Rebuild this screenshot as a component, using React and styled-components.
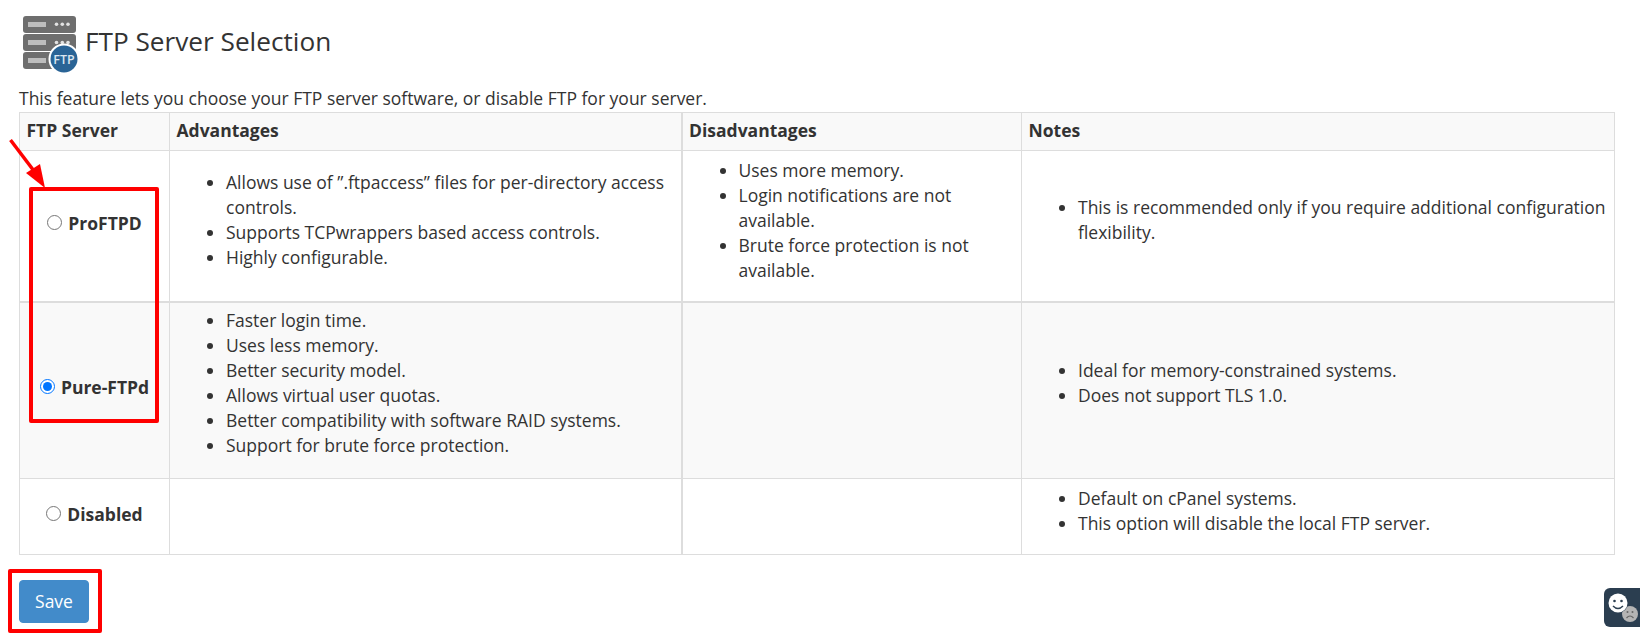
import React from "react";
import styled, { createGlobalStyle } from "styled-components";

const GlobalStyle = createGlobalStyle`
  html, body {
    margin: 0;
    background: #fff;
    overflow: hidden;
  }
  body {
    font-family: "Open Sans", "Liberation Sans", sans-serif;
    font-size: 17.500px;
    line-height: 25px;
    color: #333;
  }
`;

const Page = styled.div`
  position: relative;
  width: 1640px;
  height: 641px;
  padding: 12px 25px 0 19px;
  box-sizing: border-box;
`;

const Header = styled.header`
  display: flex;
  align-items: center;
  gap: 3px;
  height: 62px;
  margin-left: 3px;
`;

const Title = styled.h1`
  margin: 0 0 4px;
  font-size: 26.200px;
  font-weight: 400;
  line-height: 30px;
  color: #333;
`;

const Intro = styled.p`
  margin: 12px 0 0;
  height: 26px;
`;

const Table = styled.table`
  border-collapse: collapse;
  table-layout: fixed;
  width: 1596px;
`;

const HeadCell = styled.th`
  height: 35px;
  padding: 0 6.500px 2px;
  background: #f9f9f9;
  border: 1px solid #ddd;
  border-left-width: ${(props) => (props.$thick ? "2px" : "1px")};
  border-bottom-width: 1px;
  text-align: left;
  font-weight: 700;
`;

const Row = styled.tr`
  height: ${(props) => props.$height}px;
  background: ${(props) => (props.$striped ? "#f9f9f9" : "#fff")};
`;

const Cell = styled.td`
  padding: 0 7px;
  border: 1px solid #ddd;
  border-left-width: ${(props) => (props.$thick ? "2px" : "1px")};
  border-top-width: ${(props) => (props.$thickTop ? "2px" : "1px")};
  vertical-align: middle;
`;

const ChoiceCell = styled(Cell)`
  text-align: center;
`;

const Choice = styled.label`
  display: inline-block;
  margin-bottom: ${(props) => props.$bottom || 4}px;
  font-weight: 700;
`;

const Radio = styled.input.attrs({ type: "radio", name: "ftp" })`
  width: 15px;
  height: 15px;
  margin: 0 6px 0 0;
  position: relative;
  top: -3px;
  vertical-align: middle;
  accent-color: #0075ff;
`;

const List = styled.ul`
  margin: 0 0 ${(props) => props.$bottom || 11}px;
  padding-left: 49px;
`;

const SaveButton = styled.button`
  display: block;
  width: 70px;
  height: 43px;
  margin-top: 25px;
  padding: 0;
  border: 1px solid #428bca;
  border-radius: 4px;
  background: #428bca;
  color: #fff;
  font: inherit;
`;

const Annotation = styled.div`
  position: absolute;
  border: 4px solid #ff0000;
  border-radius: 2px;
  box-sizing: border-box;
  pointer-events: none;
  left: ${(props) => props.$left}px;
  top: ${(props) => props.$top}px;
  width: ${(props) => props.$width}px;
  height: ${(props) => props.$height}px;
`;

const ArrowMark = styled.svg`
  position: absolute;
  left: 8px;
  top: 138px;
`;

const FeedbackTab = styled.div`
  position: absolute;
  right: 0;
  top: 588px;
  width: 36px;
  height: 39px;
  background: #2b3e50;
  border-radius: 6px 0 0 6px;
`;

const ServerIcon = () => (
  <svg width="60" height="62" viewBox="0 0 60 62">
    <rect x="1" y="4" width="53" height="17" rx="3" fill="#6e6e6e" />
    <rect x="1" y="22" width="53" height="17" rx="3" fill="#6e6e6e" />
    <rect x="1" y="40" width="53" height="17" rx="3" fill="#6e6e6e" />
    <rect x="6" y="10" width="18" height="5" fill="#bdbdbd" />
    <rect x="6" y="28" width="18" height="5" fill="#bdbdbd" />
    <rect x="6" y="46" width="18" height="5" fill="#bdbdbd" />
    <circle cx="34.500" cy="12.300" r="1.800" fill="#e2e2e2" />
    <circle cx="40.300" cy="12.300" r="1.800" fill="#e2e2e2" />
    <circle cx="46" cy="12.300" r="1.800" fill="#e2e2e2" />
    <circle cx="34.500" cy="30.500" r="1.800" fill="#e2e2e2" />
    <circle cx="40.300" cy="30.500" r="1.800" fill="#e2e2e2" />
    <circle cx="46" cy="30.500" r="1.800" fill="#e2e2e2" />
    <circle cx="42" cy="47" r="15.500" fill="#fff" />
    <circle cx="42" cy="47" r="13.500" fill="#2a6496" />
    <text x="42" y="51.500" textAnchor="middle" fontSize="12.500" fontWeight="600" fill="#dbe6f0" fontFamily="Open Sans">FTP</text>
  </svg>
);

const Arrow = () => (
  <ArrowMark width="40" height="56" viewBox="0 0 40 56">
    <line x1="2.500" y1="2" x2="26" y2="33" stroke="#ff0000" strokeWidth="3.500" />
    <polygon points="37,50 18,35 32,26" fill="#ff0000" />
  </ArrowMark>
);

const Smiley = () => (
  <FeedbackTab>
    <svg width="36" height="39" viewBox="0 0 36 39">
      <circle cx="26" cy="26" r="8" fill="#b4b4b4" />
      <circle cx="23.500" cy="24" r="1" fill="#666" />
      <circle cx="28.500" cy="24" r="1" fill="#666" />
      <path d="M22.500 30 Q26 26 29.500 30" fill="none" stroke="#666" strokeWidth="1.200" />
      <circle cx="14" cy="15" r="10" fill="#2b3e50" />
      <circle cx="14" cy="15" r="9.500" fill="#fff" />
      <circle cx="10.500" cy="13" r="1.300" fill="#2b3e50" />
      <circle cx="17.500" cy="13" r="1.300" fill="#2b3e50" />
      <path d="M9 18 Q14 23 19 18" fill="none" stroke="#2b3e50" strokeWidth="1.500" />
    </svg>
  </FeedbackTab>
);

export default function App() {
  return (
    <Page>
      <GlobalStyle />
      <Header>
        <ServerIcon />
        <Title>FTP Server Selection</Title>
      </Header>
      <Intro>This feature lets you choose your FTP server software, or disable FTP for your server.</Intro>
      <Table>
        <colgroup>
          <col style={{ width: 150 }} />
          <col style={{ width: 512 }} />
          <col style={{ width: 340 }} />
          <col />
        </colgroup>
        <thead>
          <tr>
            <HeadCell>FTP Server</HeadCell>
            <HeadCell>Advantages</HeadCell>
            <HeadCell $thick>Disadvantages</HeadCell>
            <HeadCell>Notes</HeadCell>
          </tr>
        </thead>
        <tbody>
          <Row $height={151}>
            <ChoiceCell>
              <Choice><Radio />ProFTPD</Choice>
            </ChoiceCell>
            <Cell>
              <List>
                <li>Allows use of ”.ftpaccess” files for per-directory access controls.</li>
                <li>Supports TCPwrappers based access controls.</li>
                <li>Highly configurable.</li>
              </List>
            </Cell>
            <Cell $thick>
              <List>
                <li>Uses more memory.</li>
                <li>Login notifications are not available.</li>
                <li>Brute force protection is not available.</li>
              </List>
            </Cell>
            <Cell>
              <List>
                <li>This is recommended only if you require additional configuration flexibility.</li>
              </List>
            </Cell>
          </Row>
          <Row $height={177} $striped>
            <ChoiceCell $thickTop>
              <Choice $bottom={6}><Radio defaultChecked />Pure-FTPd</Choice>
            </ChoiceCell>
            <Cell $thickTop>
              <List $bottom={15}>
                <li>Faster login time.</li>
                <li>Uses less memory.</li>
                <li>Better security model.</li>
                <li>Allows virtual user quotas.</li>
                <li>Better compatibility with software RAID systems.</li>
                <li>Support for brute force protection.</li>
              </List>
            </Cell>
            <Cell $thick $thickTop />
            <Cell $thickTop>
              <List $bottom={15}>
                <li>Ideal for memory-constrained systems.</li>
                <li>Does not support TLS 1.0.</li>
              </List>
            </Cell>
          </Row>
          <Row $height={76}>
            <ChoiceCell>
              <Choice><Radio />Disabled</Choice>
            </ChoiceCell>
            <Cell />
            <Cell $thick />
            <Cell>
              <List>
                <li>Default on cPanel systems.</li>
                <li>This option will disable the local FTP server.</li>
              </List>
            </Cell>
          </Row>
        </tbody>
      </Table>
      <SaveButton>Save</SaveButton>
      <Arrow />
      <Annotation $left={29} $top={187} $width={130} $height={236} />
      <Annotation $left={8} $top={569} $width={94} $height={64} />
      <Smiley />
    </Page>
  );
}
